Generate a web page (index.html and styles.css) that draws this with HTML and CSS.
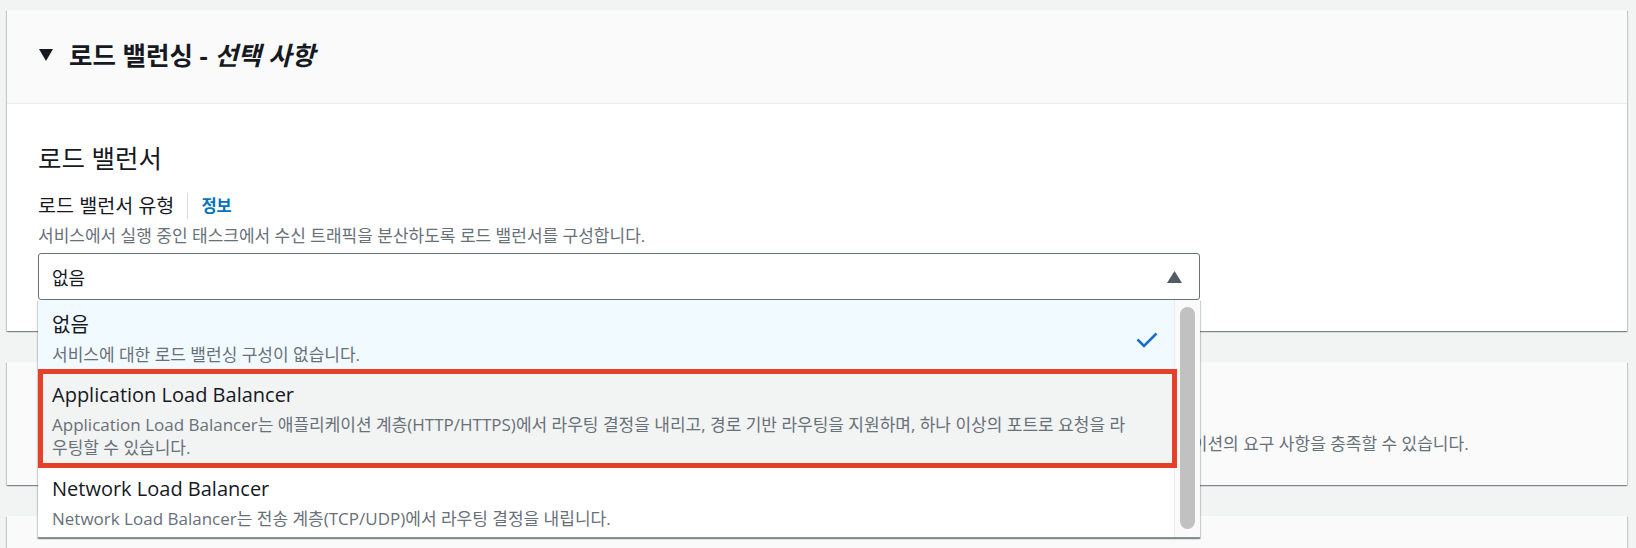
FILE: index.html
```html
<!DOCTYPE html>
<html lang="ko">
<head>
    <meta charset="utf-8">
    <title>로드 밸런싱</title>
    <link rel="stylesheet" href="styles.css">
</head>
<body>
    <div class="page">
        <section class="panel">
            <div class="panel-header">
                <svg class="caret" width="14" height="12" viewBox="0 0 14 12"><polygon points="0,0 14,0 7,12" fill="#16191f"/></svg>
                <h1 class="panel-title">로드 밸런싱 - <em>선택 사항</em></h1>
            </div>
            <div class="panel-body">
                <h2 class="section-title">로드 밸런서</h2>
                <div class="field-label">
                    <label for="lb-type">로드 밸런서 유형</label>
                    <span class="info-link">정보</span>
                </div>
                <p class="field-desc">서비스에서 실행 중인 태스크에서 수신 트래픽을 분산하도록 로드 밸런서를 구성합니다.</p>
                <div class="select" id="lb-type">
                    <div class="select-trigger">
                        <span>없음</span>
                        <svg width="15" height="12" viewBox="0 0 15 12"><polygon points="7.5,0 15,12 0,12" fill="#545b64"/></svg>
                    </div>
                    <div class="dropdown">
                        <ul class="options">
                            <li class="option selected">
                                <div class="option-text">
                                    <div class="option-title">없음</div>
                                    <div class="option-desc">서비스에 대한 로드 밸런싱 구성이 없습니다.</div>
                                </div>
                                <svg class="check" width="22" height="16" viewBox="0 0 22 16"><polyline points="1.5,7.5 8,14 20.5,1.5" fill="none" stroke="#1e6fc8" stroke-width="2.6"/></svg>
                            </li>
                            <li class="option highlighted">
                                <div class="option-text">
                                    <div class="option-title">Application Load Balancer</div>
                                    <div class="option-desc">Application Load Balancer는 애플리케이션 계층(HTTP/HTTPS)에서 라우팅 결정을 내리고, 경로 기반 라우팅을 지원하며, 하나 이상의 포트로 요청을 라우팅할 수 있습니다.</div>
                                </div>
                            </li>
                            <li class="option">
                                <div class="option-text">
                                    <div class="option-title">Network Load Balancer</div>
                                    <div class="option-desc">Network Load Balancer는 전송 계층(TCP/UDP)에서 라우팅 결정을 내립니다.</div>
                                </div>
                            </li>
                        </ul>
                        <div class="scrollbar"><div class="thumb"></div></div>
                    </div>
                </div>
            </div>
        </section>

        <section class="panel collapsed">
            <div class="collapsed-head">
                <svg class="caret" width="12" height="14" viewBox="0 0 12 14"><polygon points="0,0 12,7 0,14" fill="#16191f"/></svg>
                <h1 class="panel-title">서비스 자동 크기 조정 - <em>선택 사항</em></h1>
            </div>
            <p class="field-desc">서비스 자동 크기 조정을 사용하면 CloudWatch 경보에 따라 지정된 범위 내에서 서비스의 원하는 태스크 수를 자동으로 늘리거나 줄여 비용을 최적화하면서 애플리케이션의 요구 사항을 충족할 수 있습니다.</p>
        </section>

        <section class="panel collapsed"></section>
    </div>
</body>
</html>
```

FILE: styles.css
```css
html, body {
    margin: 0;
    height: 100%;
    overflow: hidden;
}

body {
    background-color: #f2f3f3;
    color: #16191f;
    font-family: "Open Sans", "Noto Sans CJK KR", sans-serif;
}

.page {
    padding: 10px 9px 0 7px;
}

.panel {
    background-color: #fff;
    margin-bottom: 31px;
    box-shadow: 0 1px 1px 0 rgba(0, 28, 36, 0.3), 1px 1px 1px 0 rgba(0, 28, 36, 0.15), -1px 1px 1px 0 rgba(0, 28, 36, 0.15);
}

.panel-header {
    height: 94px;
    box-sizing: border-box;
    display: flex;
    align-items: center;
    gap: 16px;
    padding: 0 31px 4px 32px;
    background-color: #fafafa;
    border-bottom: 1px solid #eaeded;
}

.panel-title {
    margin: 0;
    font-size: 25.5px;
    line-height: 32px;
    font-weight: 700;
}

.panel-title em {
    font-style: italic;
}

.panel-body {
    padding: 38px 31px 31px;
}

.section-title {
    margin: 0 0 19px;
    font-size: 25.5px;
    line-height: 32px;
    font-weight: 400;
}

.field-label {
    display: flex;
    align-items: center;
    margin-bottom: 6px;
    font-size: 19.6px;
    line-height: 26px;
}

.field-label label {
    padding-right: 13px;
    border-right: 1px solid #d5dbdb;
}

.info-link {
    padding-left: 13px;
    color: #0073bb;
    font-size: 16.5px;
    font-weight: 700;
}

.field-desc {
    margin: 0 0 6px;
    color: #687078;
    font-size: 17px;
    line-height: 22px;
}

.select {
    position: relative;
    width: 1162px;
}

.select-trigger {
    box-sizing: border-box;
    height: 47px;
    display: flex;
    align-items: center;
    justify-content: space-between;
    padding: 0 17px 0 13px;
    border: 1px solid #687078;
    border-radius: 3px;
    background-color: #fff;
    font-size: 18px;
}

.dropdown {
    position: absolute;
    top: 100%;
    left: 0;
    right: 0;
    z-index: 10;
    display: flex;
    background-color: #fff;
    border-bottom: 1px solid #879596;
    box-shadow: 0 1px 1px 0 rgba(0, 28, 36, 0.3), 1px 1px 1px 0 rgba(0, 28, 36, 0.15), -1px 1px 1px 0 rgba(0, 28, 36, 0.15);
}

.options {
    flex: 1;
    margin: 0;
    padding: 0;
    list-style: none;
}

.option {
    display: flex;
    align-items: center;
    padding: 6px 16px 7px 14px;
}

.option-text {
    flex: 1;
}

.option-title {
    font-size: 20px;
    line-height: 30px;
}

.option-desc {
    margin-top: 3px;
    color: #687078;
    font-size: 17px;
    line-height: 23px;
}

.option.selected {
    padding-top: 10px;
    padding-bottom: 3px;
    background-color: #f1faff;
}

.option.selected .check {
    margin-top: 4px;
}

.option.highlighted {
    position: relative;
    z-index: 1;
    margin-right: -3px;
    padding: 6px 34px 4px 9px;
    border: 5px solid #e6402a;
    background-color: #f2f3f3;
}

.scrollbar {
    width: 26px;
    display: flex;
    padding: 7px 5px 8px;
    box-sizing: border-box;
    border-left: 1px solid #e9ebed;
    background-color: #fafafa;
}

.thumb {
    flex: 1;
    border-radius: 8px;
    background-color: #c1c1c1;
}

.panel.collapsed {
    background-color: #fafafa;
    padding: 20px 31px 30px;
}

.collapsed-head {
    display: flex;
    align-items: center;
    gap: 16px;
    padding-left: 1px;
}

.panel.collapsed .field-desc {
    margin: 18px 0 0;
    line-height: 23px;
}

.panel.collapsed:empty {
    height: 100px;
    padding: 0;
}
```
